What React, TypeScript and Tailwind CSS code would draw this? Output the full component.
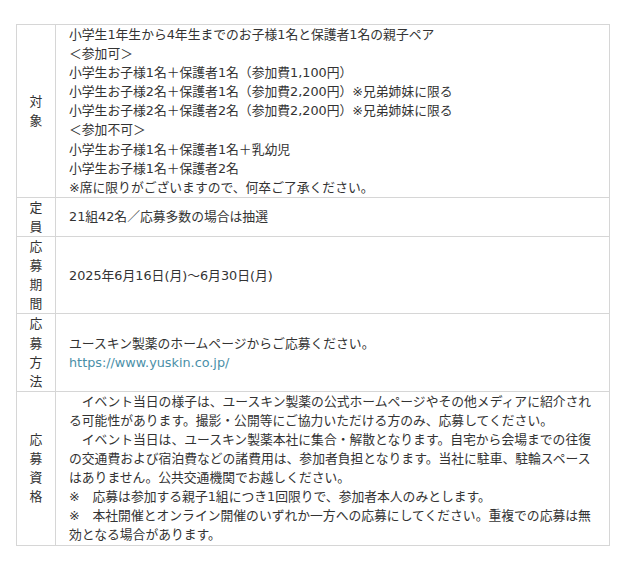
const rows: { label: string; lines: React.ReactNode[] }[] = [
  {
    label: '対象',
    lines: [
      '小学生1年生から4年生までのお子様1名と保護者1名の親子ペア',
      '＜参加可＞',
      '小学生お子様1名＋保護者1名（参加費1,100円）',
      '小学生お子様2名＋保護者1名（参加費2,200円）※兄弟姉妹に限る',
      '小学生お子様2名＋保護者2名（参加費2,200円）※兄弟姉妹に限る',
      '＜参加不可＞',
      '小学生お子様1名＋保護者1名＋乳幼児',
      '小学生お子様1名＋保護者2名',
      '※席に限りがございますので、何卒ご了承ください。',
    ],
  },
  { label: '定員', lines: ['21組42名／応募多数の場合は抽選'] },
  { label: '応募期間', lines: ['2025年6月16日(月)～6月30日(月)'] },
  {
    label: '応募方法',
    lines: [
      'ユースキン製薬のホームページからご応募ください。',
      <a key="url" href="#" className="text-[#4a8fa8]">
        https://www.yuskin.co.jp/
      </a>,
    ],
  },
  {
    label: '応募資格',
    lines: [
      '　イベント当日の様子は、ユースキン製薬の公式ホームページやその他メディアに紹介される可能性があります。撮影・公開等にご協力いただける方のみ、応募してください。',
      '　イベント当日は、ユースキン製薬本社に集合・解散となります。自宅から会場までの往復の交通費および宿泊費などの諸費用は、参加者負担となります。当社に駐車、駐輪スペースはありません。公共交通機関でお越しください。',
      '※　応募は参加する親子1組につき1回限りで、参加者本人のみとします。',
      '※　本社開催とオンライン開催のいずれか一方への応募にしてください。重複での応募は無効となる場合があります。',
    ],
  },
];

export default function App() {
  return (
    <div
      className="h-[571px] w-[640px] bg-white pl-[16px] pt-[24px] text-[12.8px] leading-[19.1px] text-[#333]"
      style={{ fontFamily: '"DejaVu Sans", "Noto Sans CJK JP", sans-serif' }}
    >
      <div className="w-[594px] border border-[#d6d6d6]">
        {rows.map((row, i) => (
          <div
            key={row.label}
            className={`grid grid-cols-[39px_1fr] ${i > 0 ? 'border-t border-[#d6d6d6]' : ''}`}
          >
            <div className="flex flex-col items-center justify-center border-r border-[#d6d6d6] text-center">
              {row.label.split('').map((ch, j) => (
                <span key={j}>{ch}</span>
              ))}
            </div>
            <div className="flex flex-col justify-center pl-[13px] pr-[12px]">
              {row.lines.map((line, j) => (
                <div key={j}>{line}</div>
              ))}
            </div>
          </div>
        ))}
      </div>
    </div>
  );
}
